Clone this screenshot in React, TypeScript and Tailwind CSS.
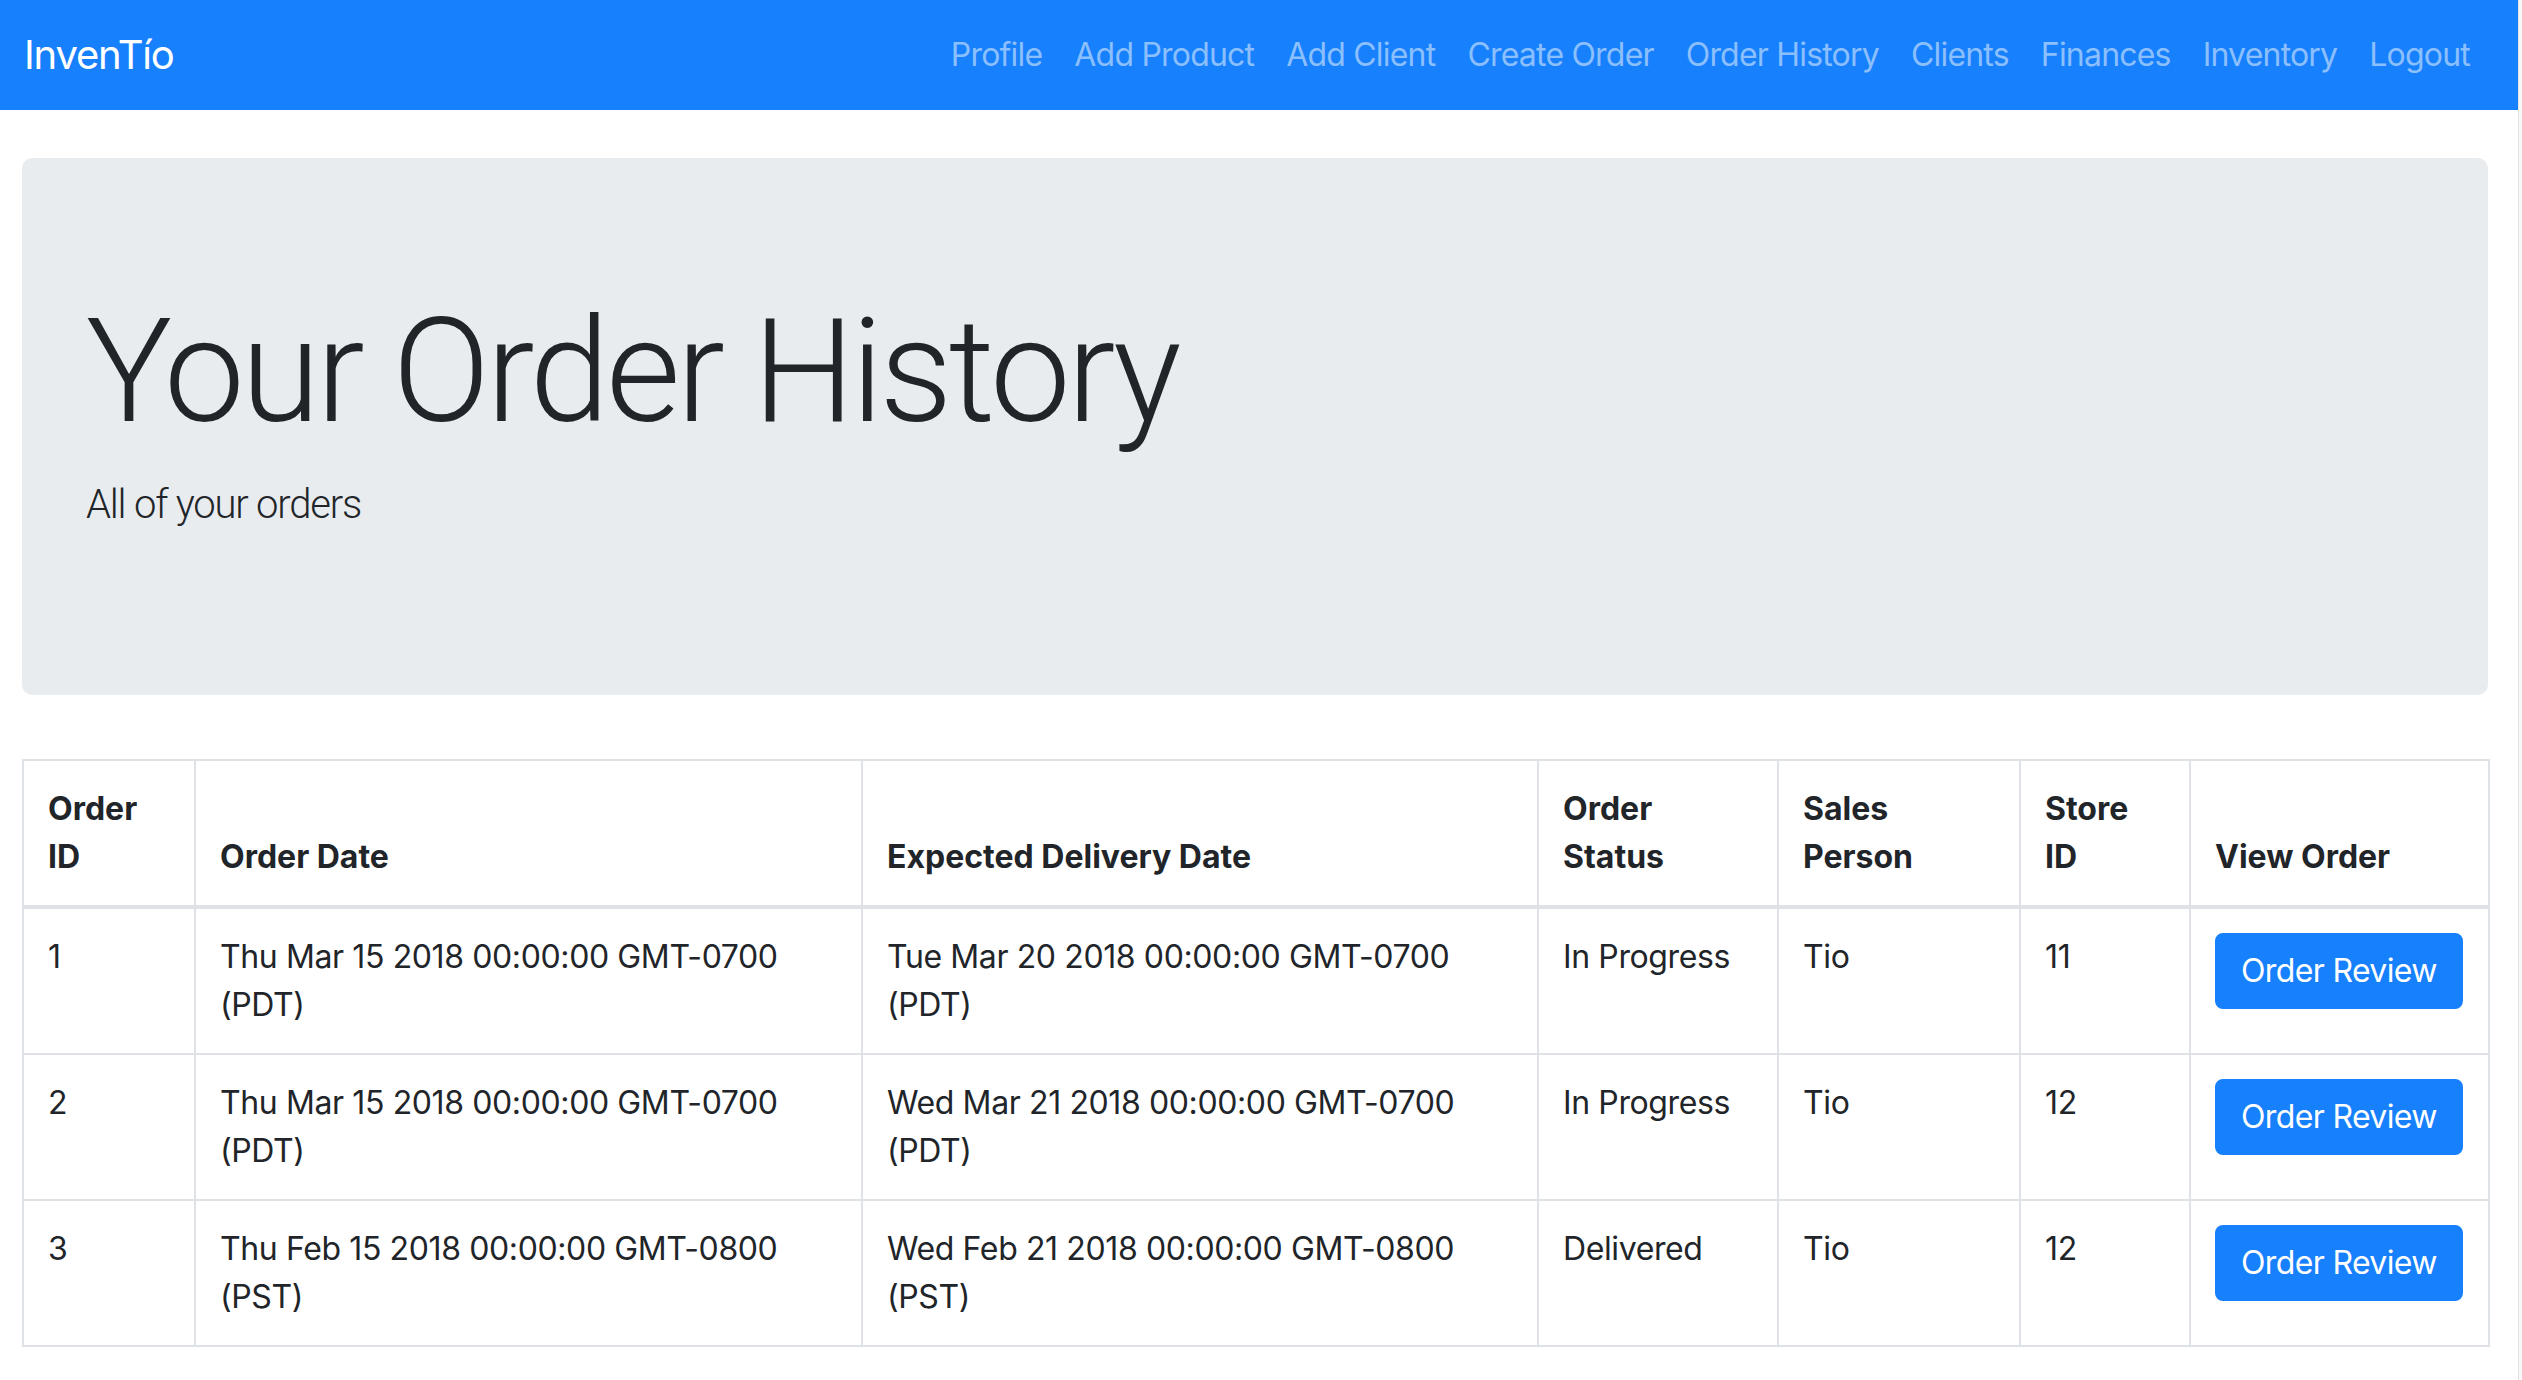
import React from "react";

type Order = {
    id: number;
    orderDate: string;
    deliveryDate: string;
    status: string;
    salesPerson: string;
    storeId: number;
};

const navLinks = [
    "Profile",
    "Add Product",
    "Add Client",
    "Create Order",
    "Order History",
    "Clients",
    "Finances",
    "Inventory",
    "Logout",
];

const orders: Order[] = [
    {
        id: 1,
        orderDate: "Thu Mar 15 2018 00:00:00 GMT-0700 (PDT)",
        deliveryDate: "Tue Mar 20 2018 00:00:00 GMT-0700 (PDT)",
        status: "In Progress",
        salesPerson: "Tio",
        storeId: 11,
    },
    {
        id: 2,
        orderDate: "Thu Mar 15 2018 00:00:00 GMT-0700 (PDT)",
        deliveryDate: "Wed Mar 21 2018 00:00:00 GMT-0700 (PDT)",
        status: "In Progress",
        salesPerson: "Tio",
        storeId: 12,
    },
    {
        id: 3,
        orderDate: "Thu Feb 15 2018 00:00:00 GMT-0800 (PST)",
        deliveryDate: "Wed Feb 21 2018 00:00:00 GMT-0800 (PST)",
        status: "Delivered",
        salesPerson: "Tio",
        storeId: 12,
    },
];

const headers = ["Order ID", "Order Date", "Expected Delivery Date", "Order Status", "Sales Person", "Store ID", "View Order"];
const colWidths = ["w-[172px]", "w-[667px]", "w-[676px]", "w-[240px]", "w-[242px]", "w-[170px]", "w-[299px]"];

const Navbar: React.FC = () => (
    <nav className="flex h-[110px] items-center justify-between bg-[#1780fc] pl-[24px] pr-[32px]">
        <a href="#" className="text-[40px] leading-[60px] tracking-[-0.03em] text-white">
            InvenTío
        </a>
        <ul className="flex">
            {navLinks.map((link) => (
                <li key={link}>
                    <a href="#" className="block px-[16px] text-[32px] leading-[48px] tracking-[-0.025em] text-[#8bbffd]">
                        {link}
                    </a>
                </li>
            ))}
        </ul>
    </nav>
);

const OrderTable: React.FC = () => (
    <table className="mt-[64px] w-[2466px] table-fixed border-collapse text-[32px] leading-[48px]">
        <colgroup>
            {colWidths.map((w) => (
                <col key={w} className={w} />
            ))}
        </colgroup>
        <thead>
            <tr>
                {headers.map((h) => (
                    <th
                        key={h}
                        className="border-2 border-b-4 border-[#dee2e6] p-[24px] text-left align-bottom font-bold"
                    >
                        {h}
                    </th>
                ))}
            </tr>
        </thead>
        <tbody className="tracking-[-0.012em]">
            {orders.map((o) => (
                <tr key={o.id}>
                    <td className="border-2 border-[#dee2e6] p-[24px] align-top">{o.id}</td>
                    <td className="border-2 border-[#dee2e6] p-[24px] align-top">{o.orderDate}</td>
                    <td className="border-2 border-[#dee2e6] p-[24px] align-top">{o.deliveryDate}</td>
                    <td className="border-2 border-[#dee2e6] p-[24px] align-top">{o.status}</td>
                    <td className="border-2 border-[#dee2e6] p-[24px] align-top">{o.salesPerson}</td>
                    <td className="border-2 border-[#dee2e6] p-[24px] align-top">{o.storeId}</td>
                    <td className="border-2 border-[#dee2e6] p-[24px] align-top">
                        <button className="whitespace-nowrap rounded-[8px] border-2 border-[#1780fc] bg-[#1780fc] px-[24px] py-[12px] text-[32px] leading-[48px] tracking-[-0.02em] text-white">
                            Order Review
                        </button>
                    </td>
                </tr>
            ))}
        </tbody>
    </table>
);

export default function App() {
    return (
        <div className="flex min-h-screen w-full bg-white font-['Inter','Liberation_Sans',sans-serif] text-[#212529]">
            <div className="w-[2518px] shrink-0">
                <Navbar />

                {/* jumbotron */}
                <main className="pl-[22px] pr-[30px] pt-[48px]">
                    <div className="rounded-[10px] bg-[#e9ecef] px-[64px] py-[128px] font-['Roboto','Liberation_Sans',sans-serif]">
                        <h1 className="text-[144px] font-light leading-[1.2] tracking-[-0.026em]">Your Order History</h1>
                        <p className="mb-[32px] mt-[16px] text-[40px] font-light leading-[60px] tracking-[-0.03em]">All of your orders</p>
                    </div>

                    {/* 注文一覧 */}
                    <OrderTable />
                </main>
            </div>
            <div className="w-[4px] shrink-0 border-l border-[#e2e2e2] bg-[#f8f8f8]" />
        </div>
    );
}
